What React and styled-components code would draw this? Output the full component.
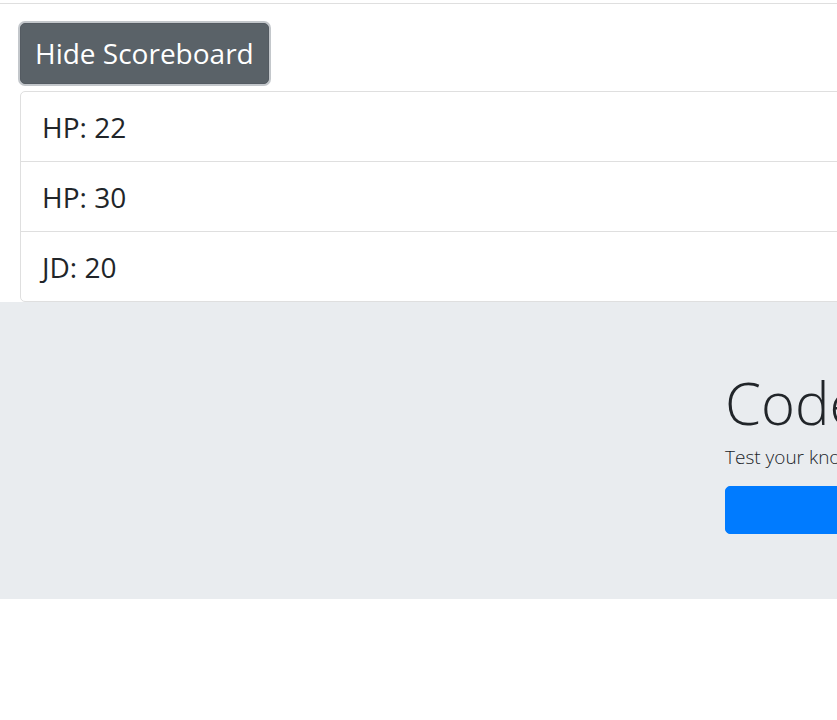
import React, { useState } from "react";
import styled, { createGlobalStyle } from "styled-components";

const GlobalStyle = createGlobalStyle`
  html, body {
    margin: 0;
    padding: 0;
    overflow: hidden;
    background: #fff;
  }
  body {
    font-family: "Segoe UI", "Open Sans", "Noto Sans", sans-serif;
    color: #212529;
  }
`;

const Page = styled.div`
  width: 1800px;
`;

const TopRule = styled.div`
  height: 3px;
  border-bottom: 1px solid #dfdfdf;
`;

const Scoreboard = styled.section`
  padding: 19px 0 0 20px;
  display: flex;
  flex-direction: column;
  align-items: flex-start;
  gap: 7px;
`;

const ToggleButton = styled.button`
  font-family: inherit;
  font-size: 28px;
  line-height: 39px;
  color: #fff;
  background: #5a6268;
  border: 1px solid #545b62;
  border-radius: 5px;
  padding: 10px 14px 10px 14px;
  box-shadow: 0 0 0 2px #c3c7cb;
  cursor: pointer;
  outline: none;
`;

const ScoreList = styled.ul`
  list-style: none;
  margin: 0;
  padding: 0;
  align-self: stretch;
  border: 1px solid #dfdfdf;
  border-radius: 5px;
`;

const ScoreItem = styled.li`
  height: 69px;
  padding: 0 21px;
  display: flex;
  align-items: center;
  font-size: 28px;
  & + & {
    border-top: 1px solid #dfdfdf;
  }
`;

const Jumbotron = styled.section`
  background: #e9ecef;
  height: 297px;
  box-sizing: border-box;
  padding: 63px 0 0 725px;
`;

const Hero = styled.div`
  width: 900px;
  display: flex;
  flex-direction: column;
`;

const Title = styled.h1`
  margin: 0;
  font-size: 58px;
  font-weight: 300;
  line-height: 76px;
`;

const Lead = styled.p`
  margin: 2px 0 15px;
  font-size: 19px;
  font-weight: 300;
  line-height: 28px;
`;

const StartButton = styled.button`
  font-family: inherit;
  height: 48px;
  font-size: 20px;
  color: #fff;
  background: #007bff;
  border: 1px solid #007bff;
  border-radius: 5px;
  cursor: pointer;
`;

const scores = [
  { initials: "HP", score: 22 },
  { initials: "HP", score: 30 },
  { initials: "JD", score: 20 },
];

export default function App() {
  const [showScores, setShowScores] = useState(true);

  return (
    <Page>
      <GlobalStyle />
      <TopRule />
      <Scoreboard>
        <ToggleButton onClick={() => setShowScores(!showScores)}>
          {showScores ? "Hide Scoreboard" : "Show Scoreboard"}
        </ToggleButton>
        {showScores && (
          <ScoreList>
            {scores.map((s, i) => (
              <ScoreItem key={i}>
                {s.initials}: {s.score}
              </ScoreItem>
            ))}
          </ScoreList>
        )}
      </Scoreboard>
      <Jumbotron>
        <Hero>
          <Title>Code Quiz</Title>
          <Lead>Test your knowledge of JavaScript with this timed quiz!</Lead>
          <StartButton>Start Quiz</StartButton>
        </Hero>
      </Jumbotron>
    </Page>
  );
}
